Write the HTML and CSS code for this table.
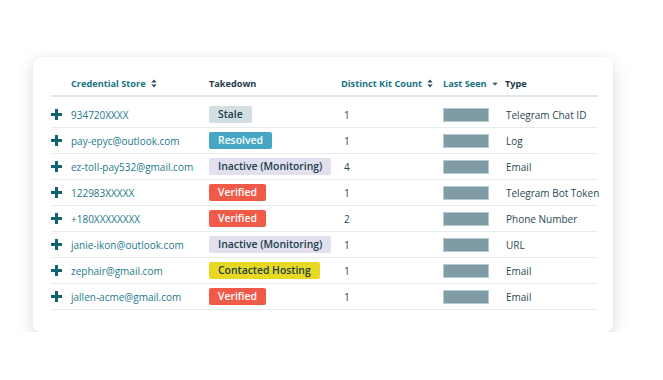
FILE: index.html
```html
<!DOCTYPE html>
<html>
<head>
<meta charset="utf-8">
<link rel="stylesheet" href="styles.css">
</head>
<body>
<div class="card">
  <div class="row head">
    <div></div>
    <div class="th link">Credential Store <span class="sort"><svg width="6" height="9" viewBox="0 0 6 9"><path d="M3 0.5 L5.6 3.6 H0.4 Z M3 8.5 L5.6 5.4 H0.4 Z" fill="#2c4a55"/></svg></span></div>
    <div class="th">Takedown</div>
    <div class="th link">Distinct Kit Count <span class="sort"><svg width="6" height="9" viewBox="0 0 6 9"><path d="M3 0.5 L5.6 3.6 H0.4 Z M3 8.5 L5.6 5.4 H0.4 Z" fill="#2c4a55"/></svg></span></div>
    <div class="th link">Last Seen <span class="sort"><svg width="6" height="4" viewBox="0 0 6 4"><path d="M0.4 0.8 H5.6 L3 3.6 Z" fill="#2c4a55"/></svg></span></div>
    <div class="th">Type</div>
  </div>
  <div class="body">
    <div class="row"><div class="plus"></div><div class="cred">934720XXXX</div><div><span class="badge stale">Stale</span></div><div class="num">1</div><div><span class="bar"></span></div><div class="type">Telegram Chat ID</div></div>
    <div class="row"><div class="plus"></div><div class="cred">pay-epyc@outlook.com</div><div><span class="badge resolved">Resolved</span></div><div class="num">1</div><div><span class="bar"></span></div><div class="type">Log</div></div>
    <div class="row"><div class="plus"></div><div class="cred">ez-toll-pay532@gmail.com</div><div><span class="badge inactive">Inactive (Monitoring)</span></div><div class="num">4</div><div><span class="bar"></span></div><div class="type">Email</div></div>
    <div class="row"><div class="plus"></div><div class="cred">122983XXXXX</div><div><span class="badge verified">Verified</span></div><div class="num">1</div><div><span class="bar"></span></div><div class="type">Telegram Bot Token</div></div>
    <div class="row"><div class="plus"></div><div class="cred">+180XXXXXXXX</div><div><span class="badge verified">Verified</span></div><div class="num">2</div><div><span class="bar"></span></div><div class="type">Phone Number</div></div>
    <div class="row"><div class="plus"></div><div class="cred">janie-ikon@outlook.com</div><div><span class="badge inactive">Inactive (Monitoring)</span></div><div class="num">1</div><div><span class="bar"></span></div><div class="type">URL</div></div>
    <div class="row"><div class="plus"></div><div class="cred">zephair@gmail.com</div><div><span class="badge hosting">Contacted Hosting</span></div><div class="num">1</div><div><span class="bar"></span></div><div class="type">Email</div></div>
    <div class="row"><div class="plus"></div><div class="cred">jallen-acme@gmail.com</div><div><span class="badge verified">Verified</span></div><div class="num">1</div><div><span class="bar"></span></div><div class="type">Email</div></div>
  </div>
</div>
</body>
</html>
```
FILE: styles.css
```css
html, body {
  margin: 0;
  padding: 0;
  background: #ffffff;
}
body {
  font-family: "Open Sans", "Liberation Sans", sans-serif;
  padding: 57px 0 0 33px;
}
.card {
  width: 580px;
  height: 275px;
  box-sizing: border-box;
  background: #fff;
  border-radius: 8px;
  box-shadow: 0 6px 18px rgba(40, 70, 80, 0.16), 0 0 6px rgba(40, 70, 80, 0.05);
  padding: 15px 15px 0 18px;
}
.row {
  display: grid;
  grid-template-columns: 20px 138px 132px 102px 62px 1fr;
  align-items: center;
  height: 25px;
  border-bottom: 1px solid #e4ecee;
}
.row > div {
  display: flex;
  align-items: center;
}
.row.head {
  height: 23px;
  border-bottom: 2px solid #dde7ea;
}
.body {
  margin-top: 5px;
}
.th {
  font-size: 9.2px;
  font-weight: 700;
  color: #1e3b47;
  white-space: nowrap;
}
.th.link {
  color: #177482;
}
.sort {
  display: inline-flex;
  margin-left: 5px;
}
.row > .plus {
  width: 11px;
  height: 11px;
  background:
    linear-gradient(#0f6470, #0f6470) center / 11px 3px no-repeat,
    linear-gradient(#0f6470, #0f6470) center / 3px 11px no-repeat;
}
.cred {
  font-size: 10px;
  color: #23798a;
  white-space: nowrap;
}
.num, .type {
  font-size: 10px;
  color: #2a4752;
  white-space: nowrap;
}
.row > .num {
  padding-left: 3px;
}
.row > .type {
  padding-left: 1px;
}
.badge {
  display: block;
  font-size: 10.4px;
  font-weight: 600;
  line-height: 17px;
  height: 17px;
  padding: 0 9px;
  border-radius: 2px;
  white-space: nowrap;
}
.stale { background: #d3dee3; color: #20404c; }
.resolved { background: #45a7c4; color: #ffffff; }
.inactive { background: #e2e0ee; color: #20404c; }
.verified { background: #f05a48; color: #ffffff; }
.hosting { background: #e9d823; color: #20404c; }
.bar {
  display: block;
  width: 46px;
  height: 14px;
  background: #7f9ca5;
  border: 1px solid #b7c9ce;
  box-sizing: border-box;
}
```
